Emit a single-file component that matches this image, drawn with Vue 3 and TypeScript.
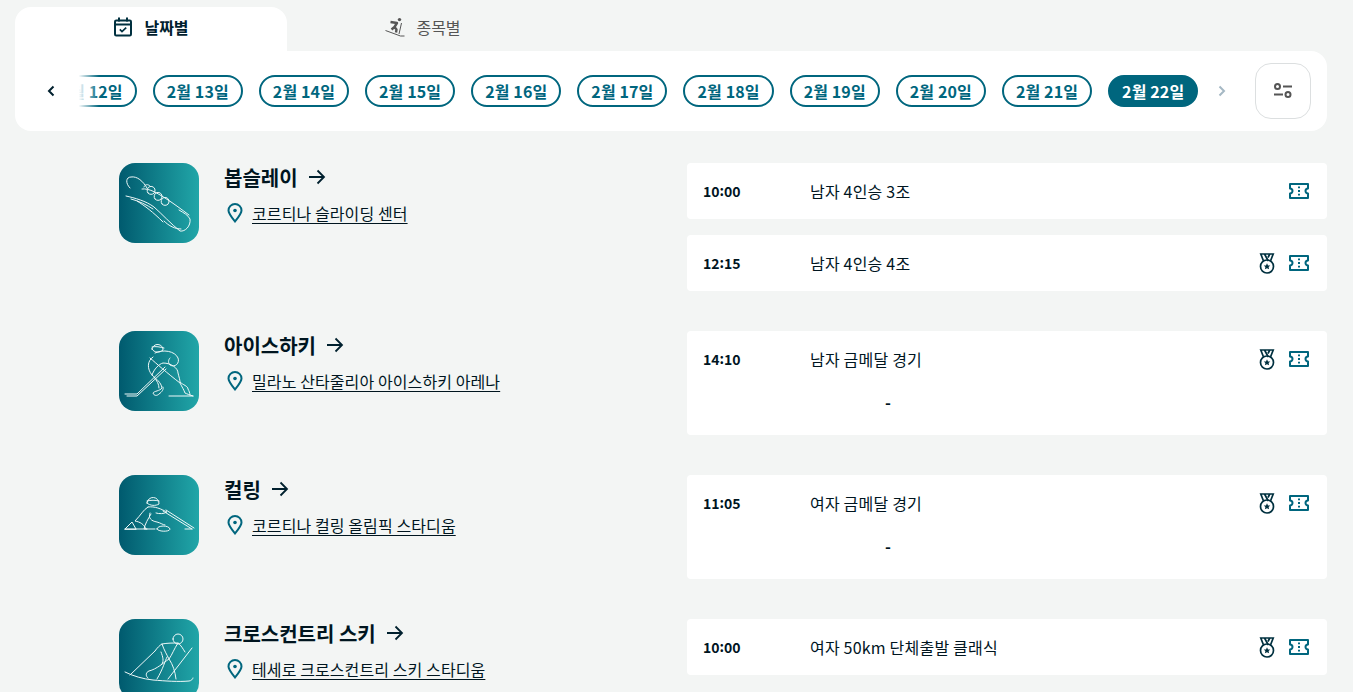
<template>
  <div class="page">
    <div class="tabs">
      <button class="tab tab-active">
        <svg class="tab-icon" viewBox="0 0 20 20" fill="none" stroke="#00303f" stroke-width="2">
          <rect x="2" y="3.5" width="16" height="15" rx="1.2" />
          <path d="M6 0.5v4M14 0.5v4M2 7.5h16" />
          <path d="M6.8 12.4l2.2 2.2 4.2-4" stroke-width="1.7" />
        </svg>
        <span>날짜별</span>
      </button>
      <button class="tab">
        <svg class="tab-icon" viewBox="0 0 20 20" fill="none" stroke="#555" stroke-width="1">
          <circle cx="14.5" cy="2.6" r="1.7" fill="#555" stroke="none" />
          <path d="M5.500 5l6.500 1-2.500 4 2 2.500-.5 3M9.500 10L6.500 12.500" stroke-width="2.400" stroke-linejoin="round" />
          <path d="M0.500 13.500l15 5.500h4M16.500 6l-2.500 11" />
        </svg>
        <span>종목별</span>
      </button>
    </div>

    <div class="date-panel">
      <button class="nav nav-prev">
        <svg width="10" height="14" viewBox="0 0 10 14" fill="none" stroke="#00202e" stroke-width="2">
          <path d="M7.5 2.5L3 7l4.500 4.500" />
        </svg>
      </button>
      <div class="date-scroll">
        <div class="date-track">
          <button v-for="d in days" :key="d" class="pill" :class="{ 'pill-active': d === 22 }">2월 {{ d }}일</button>
        </div>
        <div class="date-fade"></div>
      </div>
      <button class="nav nav-next">
        <svg width="10" height="14" viewBox="0 0 10 14" fill="none" stroke="#a5b8c4" stroke-width="2">
          <path d="M2.500 2.500L7 7l-4.500 4.500" />
        </svg>
      </button>
      <button class="filter">
        <svg width="22" height="22" viewBox="0 0 22 22" fill="none" stroke="#555" stroke-width="2">
          <circle cx="5.500" cy="6.500" r="2.500" />
          <circle cx="16" cy="14.500" r="2.500" />
          <path d="M11 6.500h9M2 14.500h9" />
        </svg>
      </button>
    </div>

    <div class="sports">
      <section v-for="s in sports" :key="s.name" class="sport">
        <div class="sport-info">
          <div class="pictogram">
            <svg viewBox="0 0 80 80" fill="none" stroke="#eef8f8" stroke-width="1" stroke-linecap="round" stroke-linejoin="round">
              <path v-for="(p, i) in pictograms[s.picto]" :key="i" :d="p" />
            </svg>
          </div>
          <div class="sport-text">
            <h2 class="sport-name">
              <span>{{ s.name }}</span>
              <svg width="18" height="18" viewBox="0 0 18 18" fill="none" stroke="#00202e" stroke-width="1.800">
                <path d="M1 9h15M9.500 2.500L16 9l-6.500 6.500" />
              </svg>
            </h2>
            <div class="venue">
              <svg width="16" height="20" viewBox="0 0 16 20" fill="none" stroke="#00667e" stroke-width="2">
                <path d="M8 18.500C4 13.500 1.500 10.500 1.500 7.500a6.500 6.500 0 0 1 13 0c0 3-2.500 6-6.500 11z" />
                <circle cx="8" cy="7.500" r="1.800" fill="#00667e" stroke="none" />
              </svg>
              <a href="#">{{ s.venue }}</a>
            </div>
          </div>
        </div>
        <div class="events">
          <div v-for="e in s.events" :key="e.time" class="event" :class="{ 'event-tall': e.dash }">
            <div class="event-row">
              <span class="event-time">{{ e.time.slice(0, 2) }}<span class="colon">:</span>{{ e.time.slice(3) }}</span>
              <span class="event-name">{{ e.name }}</span>
              <span class="event-icons">
                <svg v-if="e.medal" width="16" height="21" viewBox="0 0 16 21" fill="none" stroke="#00303f" stroke-width="1.700">
                  <path d="M4.500 8L1.800 1h12.400l-2.700 7M5.500 1l3.800 7M10.800 1L9 4.500" />
                  <circle cx="8" cy="13.500" r="6.500" />
                  <path d="M8 10.300l1 2.100 2.300.2-1.700 1.500.5 2.200-2.100-1.100-2.100 1.100.5-2.200-1.700-1.500 2.300-.2z" fill="#00303f" stroke="none" />
                </svg>
                <svg width="20" height="16" viewBox="0 0 20 16" fill="none" stroke="#00667e" stroke-width="2">
                  <path d="M1 1h18v4.500a2.500 2.500 0 0 0 0 5V15H1v-4.500a2.500 2.500 0 0 0 0-5z" stroke-linejoin="round" />
                  <path d="M10 3.500v1.800M10 7.100v1.800M10 10.700v1.800" />
                </svg>
              </span>
            </div>
            <div v-if="e.dash" class="event-dash">-</div>
          </div>
        </div>
      </section>
    </div>
  </div>
</template>

<script setup lang="ts">
interface SportEvent {
  time: string;
  name: string;
  medal: boolean;
  dash?: boolean;
}

interface Sport {
  name: string;
  venue: string;
  picto: string;
  events: SportEvent[];
}

const days: number[] = [12, 13, 14, 15, 16, 17, 18, 19, 20, 21, 22];

const sports: Sport[] = [
  {
    name: '봅슬레이',
    venue: '코르티나 슬라이딩 센터',
    picto: 'bob',
    events: [
      { time: '10:00', name: '남자 4인승 3조', medal: false },
      { time: '12:15', name: '남자 4인승 4조', medal: true },
    ],
  },
  {
    name: '아이스하키',
    venue: '밀라노 산타줄리아 아이스하키 아레나',
    picto: 'hockey',
    events: [{ time: '14:10', name: '남자 금메달 경기', medal: true, dash: true }],
  },
  {
    name: '컬링',
    venue: '코르티나 컬링 올림픽 스타디움',
    picto: 'curling',
    events: [{ time: '11:05', name: '여자 금메달 경기', medal: true, dash: true }],
  },
  {
    name: '크로스컨트리 스키',
    venue: '테세로 크로스컨트리 스키 스타디움',
    picto: 'ski',
    events: [{ time: '10:00', name: '여자 50km 단체출발 클래식', medal: true }],
  },
];

const pictograms: Record<string, string[]> = {
  bob: [
    'M11 25C6 20 7 14 12 14C18 13 24 18 28 25',
    'M7 33C16 35 27 38 35 44C43 51 52 61 61 68C66 69 72 63 71 56C69 52 65 50 60 47',
    'M23 26C30 25 38 30 46 35C54 40 62 46 70 52',
    'M12 36C20 38 28 42 34 46M18 38C26 43 34 49 44 59',
    'M45 58C50 63 56 66 62 66',
    'M29 30a4 4 0 1 1 7 -2a4 4 0 0 1 -7 2z',
    'M36 36a4 4 0 1 1 7 -2a4 4 0 0 1 -7 2z',
    'M43 41a4 4 0 1 1 7 -2a4 4 0 0 1 -7 2z',
    'M25 24c1 -3 4 -3 6 -1',
  ],
  hockey: [
    'M33 18a5.500 5 0 1 1 11 1c-3 3 -9 3 -11 -1z',
    'M33 16c4 -1 8 0 12 1',
    'M36 22C44 18 56 20 59 27C61 32 56 37 51 34C49 32 49 29 51 27',
    'M34 26C28 30 28 38 33 44C37 48 42 51 43 57C41 60 35 60 34 62C35 65 38 65 40 63C43 61 45 58 44 56',
    'M33 44C35 38 40 33 44 32C52 32 59 37 59 42C60 46 61 49 61 51C64 54 69 55 69 58C70 60 71 62 71 64',
    'M31 27C38 33 48 42 61 52C63 56 65 59 66 62C68 63 71 64 74 65',
    'M50 65H74',
    'M6 63H18L46 36',
    'M8 65H18L47 38',
    'M35 46C38 50 40 53 40 57',
  ],
  curling: [
    'M28 28a6 6 0 1 1 12 1c-3 2 -9 2 -12 -1z',
    'M28 26c4 -1 8 -1 12 0',
    'M29 32C24 35 22 40 16 46C21 47 25 49 27 54',
    'M29 32C36 31 42 34 48 37C45 39 40 39 37 38',
    'M31 38C29 43 32 46 38 47C42 48 44 50 46 50',
    'M32 39C29 44 26 49 25 54H36',
    'M44 36L73 54',
    'M47 35L75 53',
    'M66 54H73',
    'M38 54c0 -4 12 -4 13 0c0 3 -12 3 -13 0z',
    'M6 54L13 47L17 54z',
    'M6 54H28',
  ],
  ski: [
    'M54 20a5 5 0 1 1 10 0a5 5 0 0 1 -10 0z',
    'M6 53C14 57 24 60 34 61C46 62 60 63 70 62C72 62 74 60 74 59',
    'M11 56L36 32',
    'M49 60L73 29',
    'M36 32C38 29 41 26 43 25C48 24 54 24 59 24C62 26 64 30 66 33',
    'M43 25C45 31 48 36 50 40C54 46 56 52 57 60',
    'M59 24C55 30 53 36 50 40C44 44 38 50 30 52C27 53 26 57 29 59',
    'M48 38C46 42 44 50 38 60',
    'M42 33C44 38 45 42 43 45',
  ],
};
</script>

<style scoped>
.page {
  height: 692px;
  overflow: hidden;
  padding: 7px 26px 0 15px;
  box-sizing: border-box;
  background: #f3f5f4;
  color: #00151f;
  font-family: "Noto Sans CJK KR", "Noto Sans", sans-serif;
}

button {
  font-family: inherit;
  border: none;
  background: none;
  padding: 0;
  cursor: pointer;
}

.tabs {
  display: flex;
  height: 44px;
}

.tab {
  width: 272px;
  display: flex;
  align-items: center;
  justify-content: center;
  gap: 11px;
  padding-bottom: 4px;
  font-size: 16px;
  color: #555;
  border-radius: 16px 16px 0 0;
}

.tab-active {
  background: #fff;
  color: #00202e;
  font-weight: 700;
}

.tab-icon {
  width: 20px;
  height: 20px;
}

.date-panel {
  display: flex;
  align-items: center;
  height: 80px;
  padding: 0 16px 0 27px;
  background: #fff;
  border-radius: 0 16px 16px 16px;
}

.nav {
  width: 18px;
  display: flex;
  justify-content: center;
  flex-shrink: 0;
}

.date-scroll {
  position: relative;
  width: 1124px;
  margin-left: 15px;
  margin-right: 14px;
  overflow: hidden;
  flex-shrink: 0;
}

.date-track {
  display: flex;
  justify-content: flex-end;
  gap: 16px;
  padding-right: 0.75px;
}

.date-fade {
  position: absolute;
  left: 0;
  top: 0;
  bottom: 0;
  width: 24px;
  background: linear-gradient(to right, #fff 15%, rgba(255, 255, 255, 0));
}

.pill {
  flex-shrink: 0;
  height: 32px;
  padding: 0 12px;
  box-sizing: border-box;
  border: 2px solid #00667e;
  border-radius: 16px;
  font-size: 16px;
  font-weight: 700;
  letter-spacing: 0.125px;
  color: #00667e;
  white-space: nowrap;
  background: #fff;
}

.pill-active {
  background: #00667e;
  color: #fff;
}

.filter {
  width: 56px;
  height: 56px;
  margin-left: 24px;
  display: flex;
  align-items: center;
  justify-content: center;
  flex-shrink: 0;
  border: 1px solid #dcdfe0;
  border-radius: 16px;
}

.sports {
  display: flex;
  flex-direction: column;
  gap: 40px;
  margin-top: 32px;
  padding-left: 104px;
}

.sport {
  display: flex;
  justify-content: space-between;
}

.sport-info {
  display: flex;
  gap: 25px;
}

.pictogram {
  width: 80px;
  height: 80px;
  border-radius: 16px;
  background: linear-gradient(to right, #005a6e, #21a6a8);
  flex-shrink: 0;
}

.pictogram svg {
  display: block;
  width: 80px;
  height: 80px;
}

.sport-text {
  display: flex;
  flex-direction: column;
}

.sport-name {
  display: flex;
  align-items: center;
  gap: 10px;
  height: 28px;
  margin: 0;
  font-size: 20px;
  font-weight: 700;
}

.venue {
  display: flex;
  align-items: center;
  gap: 9px;
  margin-top: 10px;
  padding-left: 3px;
  font-size: 16px;
  letter-spacing: 0.1px;
}

.venue a {
  color: #00151f;
  text-decoration: underline;
  text-underline-offset: 3px;
}

.events {
  width: 640px;
  display: flex;
  flex-direction: column;
  gap: 16px;
}

.event {
  height: 56px;
  padding: 0 18px 0 16px;
  box-sizing: border-box;
  background: #fff;
  border-radius: 4px;
}

.event-tall {
  height: 104px;
}

.event-row {
  display: flex;
  align-items: center;
  height: 56px;
}

.event-time {
  width: 107px;
  font-size: 14px;
  font-weight: 700;
}

.colon {
  position: relative;
  top: -1px;
}

.event-name {
  flex: 1;
  font-size: 16px;
  letter-spacing: 0.2px;
}

.event-icons {
  display: flex;
  align-items: center;
  gap: 14px;
}

.event-dash {
  margin-top: 3px;
  padding-left: 182px;
  font-size: 16px;
  font-weight: 700;
}
</style>

<style>
html,
body {
  margin: 0;
  overflow: hidden;
}
</style>
